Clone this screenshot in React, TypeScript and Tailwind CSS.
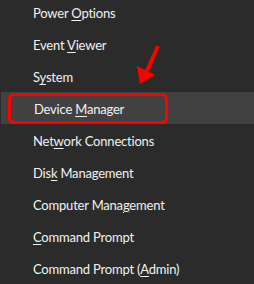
import React from "react";

const items: { pre: string; key: string; post: string }[] = [
  { pre: "Power ", key: "O", post: "ptions" },
  { pre: "Event ", key: "V", post: "iewer" },
  { pre: "S", key: "y", post: "stem" },
  { pre: "Device ", key: "M", post: "anager" },
  { pre: "Net", key: "w", post: "ork Connections" },
  { pre: "Dis", key: "k", post: " Management" },
  { pre: "Computer Mana", key: "g", post: "ement" },
  { pre: "", key: "C", post: "ommand Prompt" },
  { pre: "Command Prompt (", key: "A", post: "dmin)" },
];

export default function App() {
  return (
    <div className="relative w-[254px] h-[284px] overflow-hidden bg-[#2b2b2b] font-['Segoe_UI','Lato',sans-serif] text-[13px] tracking-[-0.2px] text-[#f2f2f2]">
      <div className="flex flex-col mt-[-4px]">
        {items.map((item, i) => (
          <div
            key={i}
            className={`h-8 flex items-center pl-[33px] pt-[3px] ${
              i === 3 ? "ml-[1px] bg-[#414141]" : ""
            }`}
          >
            <span>
              {item.pre}
              <span className="underline underline-offset-2">{item.key}</span>
              {item.post}
            </span>
          </div>
        ))}
      </div>

      {/* annotation box */}
      <div className="absolute left-[8px] top-[93px] w-[160px] h-[31px] rounded-[6px] border-[3px] border-[#ff0000]" />

      {/* annotation arrow */}
      <svg
        className="absolute left-0 top-0"
        width="254"
        height="284"
        viewBox="0 0 254 284"
      >
        <line x1="158" y1="46" x2="147" y2="71" stroke="#ff0000" strokeWidth="4" />
        <polygon points="140,84 137,66 155,75" fill="#ff0000" />
      </svg>
    </div>
  );
}
